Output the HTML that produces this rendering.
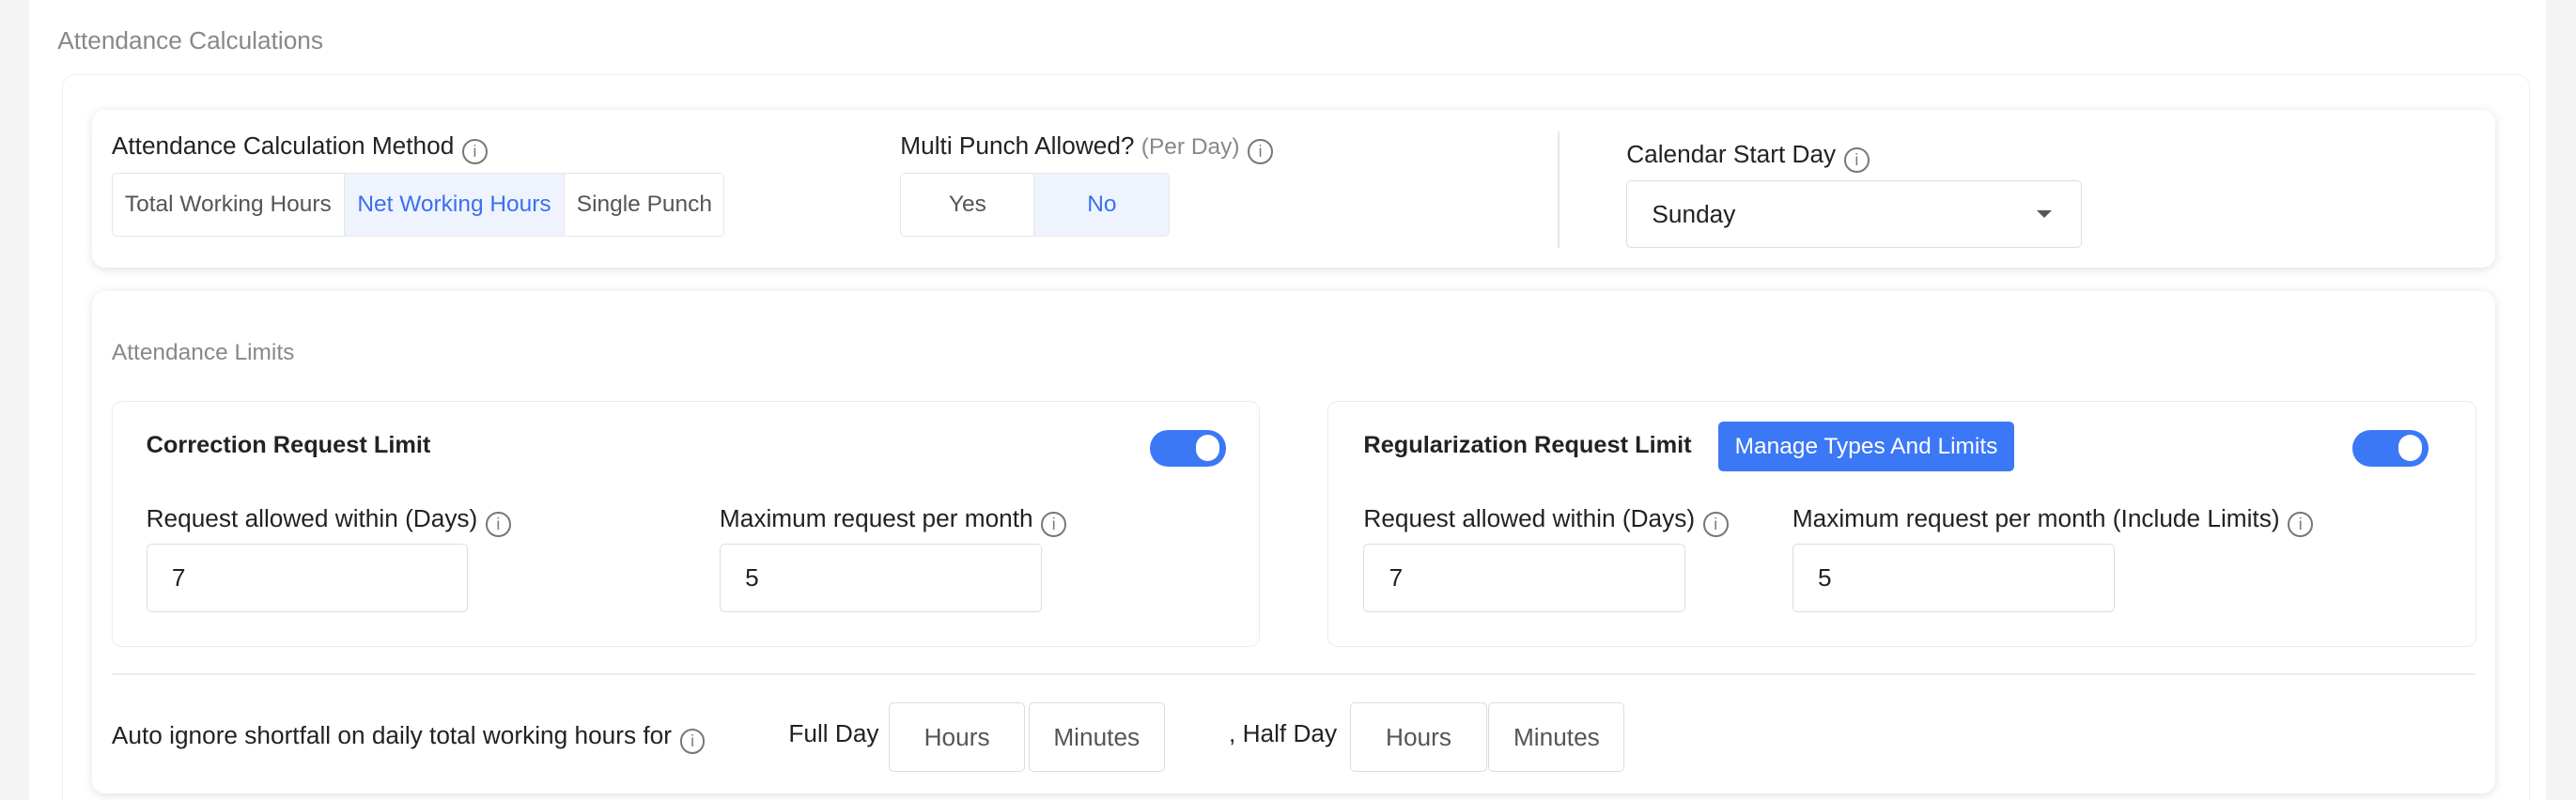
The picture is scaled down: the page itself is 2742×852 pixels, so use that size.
<!DOCTYPE html>
<html><head><meta charset="utf-8"><style>
html,body{margin:0;padding:0;overflow:hidden;height:852px;}
body{width:2742px;background:#f4f4f5;font-family:"Liberation Sans",sans-serif;}
#z{zoom:1.7487;position:relative;width:1568px;height:487px;overflow:hidden;}
.a{position:absolute;}
.panel{left:18px;top:0;width:1532px;height:487px;background:#fff;}
.card{background:#fff;border-radius:8px;box-shadow:0 1px 6px rgba(0,0,0,.12);}
.t{font-size:15px;color:#222;white-space:nowrap;}
.g{color:#888;}
.i{display:inline-block;width:13px;height:13px;border:1.4px solid #777;border-radius:50%;font-size:10px;line-height:13px;text-align:center;color:#777;vertical-align:-2px;margin-left:5px;font-weight:normal;}
.seg{border:1px solid #e6e6e6;border-radius:3px;display:flex;overflow:hidden;}
.seg div{display:flex;align-items:center;justify-content:center;font-size:14px;color:#555;border-right:1px solid #e6e6e6;}
.seg div:last-child{border-right:0;}
.seg .on{background:#eef3fe;color:#3b6ff0;}
.box{border:1px solid #ececec;border-radius:6px;}
.in{border:1px solid #ddd;border-radius:3px;background:#fff;font-size:15px;color:#222;padding-left:15px;box-sizing:border-box;display:flex;align-items:center;}
.tg{width:46px;height:22px;background:#3b78f6;border-radius:11px;}
.tg:after{content:"";position:absolute;right:4px;top:3px;width:14px;height:16px;border-radius:8px;background:#fff;}
.hm{justify-content:center;padding:0;color:#555;}
</style></head><body><div id="z">
<div class="a panel"></div>
<div class="a t g" style="left:35px;top:16px;">Attendance Calculations</div>
<div class="a" style="left:38px;top:45px;width:1502px;height:450px;border:1px solid #efefef;border-bottom:0;border-radius:8px 8px 0 0;box-sizing:border-box;max-height:442px;"></div>

<div class="a card" style="left:56px;top:67px;width:1463px;height:96px;"></div>
<div class="a t" style="left:68px;top:80px;">Attendance Calculation Method<span class="i">i</span></div>
<div class="a seg" style="left:68px;top:105px;width:372px;height:38px;">
<div style="width:141px">Total Working Hours</div><div class="on" style="width:134px">Net Working Hours</div><div style="width:97px">Single Punch</div></div>
<div class="a t" style="left:548px;top:80px;">Multi Punch Allowed? <span class="g" style="font-size:14px">(Per Day)</span><span class="i">i</span></div>
<div class="a seg" style="left:548px;top:105px;width:163px;height:38px;">
<div style="width:81px">Yes</div><div class="on" style="width:82px">No</div></div>
<div class="a" style="left:948px;top:80px;width:1px;height:71px;background:#e6e6e6;"></div>
<div class="a t" style="left:990px;top:85px;">Calendar Start Day<span class="i">i</span></div>
<div class="a in" style="left:990px;top:110px;width:277px;height:41px;">Sunday</div>
<div class="a" style="left:1240px;top:128px;width:0;height:0;border-left:5px solid transparent;border-right:5px solid transparent;border-top:5px solid #555;"></div>

<div class="a card" style="left:56px;top:177px;width:1463px;height:306px;"></div>
<div class="a t g" style="left:68px;top:207px;font-size:14px;">Attendance Limits</div>

<div class="a box" style="left:68px;top:244px;width:698px;height:149px;"></div>
<div class="a t" style="left:89px;top:263px;font-weight:bold;font-size:14.5px;">Correction Request Limit</div>
<div class="a tg" style="left:700px;top:262px;"></div>
<div class="a t" style="left:89px;top:307px;">Request allowed within (Days)<span class="i">i</span></div>
<div class="a t" style="left:438px;top:307px;">Maximum request per month<span class="i">i</span></div>
<div class="a in" style="left:89px;top:331px;width:196px;height:42px;">7</div>
<div class="a in" style="left:438px;top:331px;width:196px;height:42px;">5</div>

<div class="a box" style="left:808px;top:244px;width:698px;height:149px;"></div>
<div class="a t" style="left:830px;top:263px;font-weight:bold;font-size:14.5px;">Regularization Request Limit</div>
<div class="a" style="left:1046px;top:257px;width:180px;height:30px;background:#3b78f6;border-radius:3px;color:#fff;font-size:14px;display:flex;align-items:center;justify-content:center;">Manage Types And Limits</div>
<div class="a tg" style="left:1432px;top:262px;"></div>
<div class="a t" style="left:830px;top:307px;">Request allowed within (Days)<span class="i">i</span></div>
<div class="a t" style="left:1091px;top:307px;">Maximum request per month (Include Limits)<span class="i">i</span></div>
<div class="a in" style="left:830px;top:331px;width:196px;height:42px;">7</div>
<div class="a in" style="left:1091px;top:331px;width:196px;height:42px;">5</div>

<div class="a" style="left:68px;top:410px;width:1439px;height:1px;background:#ececec;"></div>
<div class="a t" style="left:68px;top:439px;">Auto ignore shortfall on daily total working hours for<span class="i">i</span></div>
<div class="a t" style="left:480px;top:438px;">Full Day</div>
<div class="a in hm" style="left:541px;top:428px;width:83px;height:42px;">Hours</div>
<div class="a in hm" style="left:626px;top:428px;width:83px;height:42px;">Minutes</div>
<div class="a t" style="left:748px;top:438px;">, Half Day</div>
<div class="a in hm" style="left:822px;top:428px;width:83px;height:42px;">Hours</div>
<div class="a in hm" style="left:906px;top:428px;width:83px;height:42px;">Minutes</div>
</div></body></html>
